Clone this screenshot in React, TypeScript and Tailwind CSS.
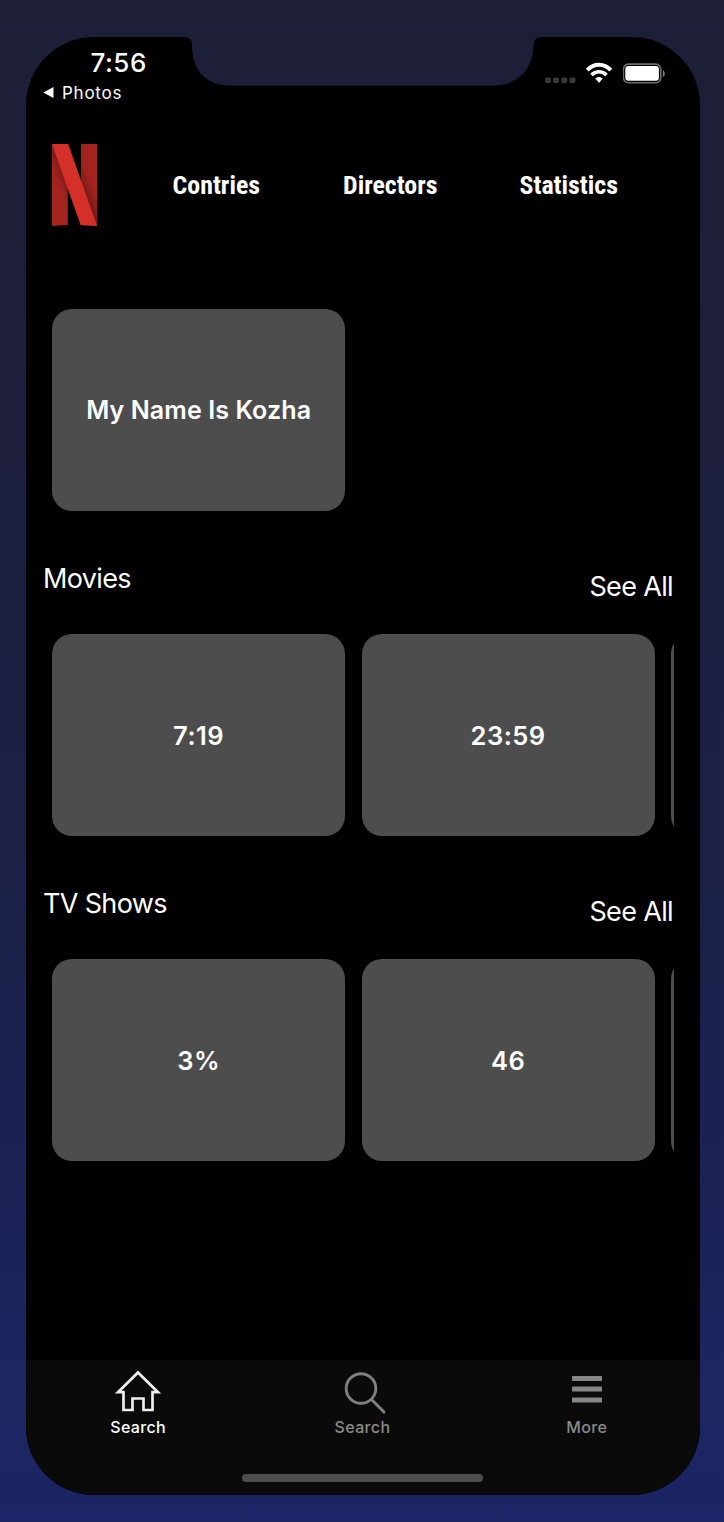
import React from "react";

function Notch() {
  return (
    <svg className="absolute top-0 left-[154px]" width="366" height="49" viewBox="0 0 366 49" fill="#1d1f39">
      <path d="M4 -1V0C9.5 0 12 3.5 12 8C12 34 26 48.7 52 48.7H311C337 48.7 353 34 353.5 8C353.5 3.5 356 0 362 0V-1Z" />
    </svg>
  );
}

function StatusBar() {
  return (
    <div className="flex h-[72px] justify-between pr-[34px] pl-[17px]">
      <div className="flex flex-col pt-[10px]">
        <span className="pl-[47.5px] text-[26px] leading-[32px] font-medium tracking-[0.5px]">7:56</span>
        <span className="mt-[5px] flex items-center gap-[8px] text-[17px] leading-[19px] tracking-[0.75px]">
          <svg className="-mt-[2px]" width="11" height="11" viewBox="0 0 11 11" fill="white">
            <path d="M0.3 5.5 10.5 0V11Z" />
          </svg>
          Photos
        </span>
      </div>
      <div className="mt-[22px] flex h-[27px] items-end">
        <svg width="31" height="27" viewBox="0 0 31 27" fill="#3a3a3a">
          <rect x="0" y="18.5" width="6" height="5.5" rx="1.8" />
          <rect x="8" y="18.5" width="6" height="5.5" rx="1.8" />
          <rect x="16.2" y="18.5" width="6" height="5.5" rx="1.8" />
          <rect x="24.5" y="18.5" width="6" height="5.5" rx="1.8" />
        </svg>
        <svg className="ml-[10px]" width="27" height="27" viewBox="0 0 27 27" fill="none" stroke="white">
          <path d="M1.2 11.2C7.8 4 18.2 4 24.8 11.2" strokeWidth="4" />
          <path d="M5.5 16C9.8 11.7 16.2 11.7 20.5 16" strokeWidth="3.6" />
          <path d="M9.2 19.6C11.3 17.3 14.7 17.3 16.8 19.6L13 23.8Z" fill="white" stroke="none" />
        </svg>
        <svg className="ml-[10px]" width="43" height="27" viewBox="0 0 43 27">
          <rect x="0.4" y="5.1" width="37.4" height="18.6" rx="5" fill="none" stroke="#6b6b6b" strokeWidth="1.6" />
          <rect x="2.3" y="7.1" width="33.6" height="14.6" rx="3" fill="white" />
          <path d="M39.8 11.2C42.5 12.4 42.5 16.8 39.8 18Z" fill="#777777" />
        </svg>
      </div>
    </div>
  );
}

function Logo() {
  return (
    <svg width="46" height="82" viewBox="0 0 46 82">
      <defs>
        <linearGradient id="left-shade" x1="0" y1="44" x2="15" y2="38" gradientUnits="userSpaceOnUse">
          <stop offset="0.45" stopColor="#a4231f" />
          <stop offset="1" stopColor="#7d1b18" />
        </linearGradient>
        <linearGradient id="right-shade" x1="46" y1="36" x2="31" y2="42" gradientUnits="userSpaceOnUse">
          <stop offset="0.45" stopColor="#a4231f" />
          <stop offset="1" stopColor="#7d1b18" />
        </linearGradient>
      </defs>
      <path d="M0 0H15.8V81L0 82Z" fill="url(#left-shade)" />
      <path d="M29 0H45.1V82L29 81Z" fill="url(#right-shade)" />
      <path d="M0 0H16.2L45.1 82L28.6 81Z" fill="#d43028" />
    </svg>
  );
}

function Card({ title }: { title?: string }) {
  return (
    <div className="flex h-[201.5px] w-[293.25px] shrink-0 items-center justify-center rounded-[20px] bg-[#4d4d4d] pt-[2px] font-semibold">
      {title}
    </div>
  );
}

function Shelf({ name, titles }: { name: string; titles: string[] }) {
  return (
    <section className="h-[325.4px]">
      <div className="flex h-[84px] items-start justify-between pr-[27px] pl-[17px] text-[27px] leading-[32px] tracking-[-0.65px]">
        <h2 className="mt-[12.6px]">{name}</h2>
        <span className="mt-[20.6px]">See All</span>
      </div>
      <div className="mr-[26px] flex gap-[16.25px] overflow-hidden pl-[26px] text-[25.5px] tracking-[0.5px]">
        {titles.map((t) => (
          <Card key={t} title={t} />
        ))}
        <Card />
      </div>
    </section>
  );
}

function Tab({ label, active, children }: { label: string; active?: boolean; children: React.ReactNode }) {
  return (
    <div className={active ? "flex flex-1 flex-col items-center text-white" : "flex flex-1 flex-col items-center text-[#8a8a8a]"}>
      <div className="flex h-[56px] items-end">{children}</div>
      <span className="text-[16px] leading-[23px] font-medium tracking-[0.35px]">{label}</span>
    </div>
  );
}

export default function App() {
  return (
    <div className="h-[1522px] w-[724px] bg-linear-[180deg,#1d1f37_0%,#1d1f39_15%,#1d1f40_40%,#1c2046_57%,#1b2356_78%,#1c2661_92%,#1c2565_100%] py-[37px] pr-[24px] pl-[26px] text-white [font-family:Inter,'Liberation_Sans',sans-serif]">
      <div className="relative flex h-[1458px] flex-col overflow-hidden rounded-[68px] bg-black">
        <Notch />
        <StatusBar />
        <header className="flex h-[150px] items-center pt-[1px] pl-[26px] text-[25.9px] font-bold [font-family:'Roboto_Condensed',Roboto,sans-serif]">
          <Logo />
          <span className="ml-[74.5px] w-[170.5px] pt-[1px]">Contries</span>
          <span className="w-[176.5px] pt-[1px]">Directors</span>
          <span className="pt-[1px]">Statistics</span>
        </header>
        <div className="h-[291px] pt-[50px] pl-[26px] text-[25px] tracking-[0.1px]">
          <Card title="My Name Is Kozha" />
        </div>
        <Shelf name="Movies" titles={["7:19", "23:59"]} />
        <Shelf name="TV Shows" titles={["3%", "46"]} />
        <nav className="mt-auto h-[135px] bg-[#0a0a0a]">
          <div className="flex pr-[1px]">
            <Tab label="Search" active>
              <svg className="mb-[4px]" width="46" height="42" viewBox="0 0 46 42" fill="none" stroke="#eeeeee" strokeWidth="2.7">
                <path d="M23 2.5 43 22.2H37.5V40H28.5V28.5H17.5V40H8.5V22.2H3Z" />
              </svg>
            </Tab>
            <Tab label="Search">
              <svg className="mb-[1px] ml-[6px]" width="46" height="44" viewBox="0 0 46 44" fill="none" stroke="#7f7f7f">
                <circle cx="19" cy="17.5" r="14.8" strokeWidth="2.9" />
                <path d="M29.3 28.3 42 41" strokeWidth="3" strokeLinecap="round" />
              </svg>
            </Tab>
            <Tab label="More">
              <svg className="mb-[12px]" width="32" height="28" viewBox="0 0 32 28" fill="#858585">
                <rect x="1" y="0" width="30" height="5" rx="0.6" />
                <rect x="1" y="10.5" width="30" height="5" rx="0.6" />
                <rect x="1" y="21.5" width="30" height="5" rx="0.6" />
              </svg>
            </Tab>
          </div>
          <div className="mt-[34.5px] ml-[216px] h-[8px] w-[241px] rounded-full bg-[#4d4d4d]" />
        </nav>
      </div>
    </div>
  );
}
